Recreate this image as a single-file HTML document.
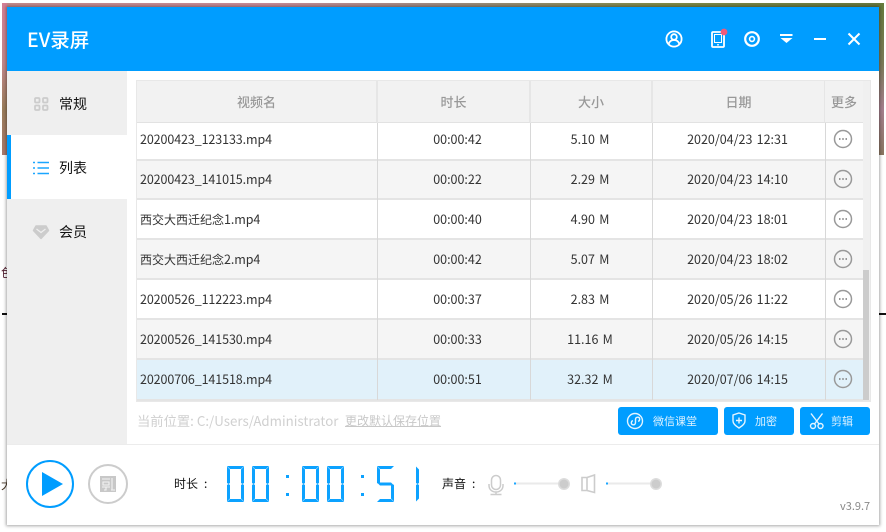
<!DOCTYPE html>
<html lang="zh-CN"><head><meta charset="utf-8"><title>EV录屏</title>
<style>
*{box-sizing:border-box;margin:0;padding:0}
html,body{width:886px;height:532px;overflow:hidden;background:#fff}
body{position:relative;font-family:"Liberation Sans","Noto Sans CJK SC",sans-serif;font-size:12px;color:#333}
.a{position:absolute}
.cell{position:absolute;text-align:center;white-space:nowrap;font-family:"Noto Sans CJK SC",sans-serif;font-size:12.5px;line-height:20px;color:#333;word-spacing:1.500px}
.name{text-align:left;letter-spacing:-.1px;word-spacing:0}
.name b{font-weight:400;font-size:12px;letter-spacing:0}
.hd{position:absolute;top:81px;height:42px;background:#f2f2f2;border-right:2px solid #e6e6e6;border-bottom:1px solid #e2e2e2;text-align:center;line-height:41px;font-family:"Noto Sans CJK SC",sans-serif;font-size:13px;font-weight:500;color:#999}
.row{position:absolute;left:137px;width:726px;height:40px;border-bottom:2px solid #e4e4e4}
.v{position:absolute;top:123px;width:1px;height:277px;background:#d8d8d8}
.btn{position:absolute;top:407px;height:28px;background:#009dff;border-radius:3px;color:#dff2ff;font-family:"Noto Sans CJK SC",sans-serif;font-size:11px;line-height:28px}
.nav{position:absolute;left:59px;font-family:"Noto Sans CJK SC",sans-serif;font-size:14px;line-height:20px;color:#111}
svg{position:absolute;overflow:visible}
.t{left:381px;width:153px}.s{left:529px;width:122px}.d{left:651px;width:173px}
</style></head><body>
<div class="a" style="left:2px;top:3px;width:882px;height:152px;background:linear-gradient(90deg,#c38a8c 0,#c78b98 30%,#9c8a80 50%,#7f8a48 75%,#66783f 100%)"></div>
<div class="a" style="left:2px;top:3px;width:5px;height:152px;background:linear-gradient(180deg,#d47f95 0,#c1878a 40%,#9a7d5b 70%,#a8786c 100%)"></div>
<div class="a" style="left:879px;top:3px;width:5px;height:152px;background:linear-gradient(180deg,#667a3c 0,#7c7a58 40%,#a57f8d 70%,#8a7560 100%)"></div>
<div class="a" style="left:1px;top:264px;font:12px 'Noto Sans CJK SC',sans-serif;width:6px;overflow:hidden;color:#523;height:16px">&#33394;</div>
<div class="a" style="left:2px;top:313px;width:5px;height:2px;background:#111"></div>
<div class="a" style="left:879px;top:313px;width:7px;height:2px;background:#111"></div>
<div class="a" style="left:1px;top:476px;font:12px 'Noto Sans CJK SC',sans-serif;width:6px;overflow:hidden;color:#432;height:16px">&#22823;</div>
<div class="a" style="left:7px;top:7px;width:872px;height:518px;background:#fff;box-shadow:0 0 3px 1px rgba(0,0,0,.35)"></div>

<div class="a" style="left:7px;top:7px;width:872px;height:64px;background:#009dff"></div>
<div class="a" style="left:27px;top:26px;color:#fff;font-family:'Noto Sans CJK SC',sans-serif;font-size:19.500px;font-weight:500;line-height:26px">EV录屏</div>

<svg style="left:0;top:0" width="886" height="532" fill="none">
<g stroke="#fff" stroke-width="1.800">
<circle cx="674" cy="39" r="7.600"/><circle cx="674" cy="37" r="2.800"/><path d="M668.600 44.300c.8-3 2.800-4.300 5.400-4.300s4.600 1.300 5.400 4.300"/>
<rect x="712" y="32" width="12" height="15" rx="1"/><path d="M714.500 34.500h7v8h-7z" stroke-width="1"/><path d="M717 44.800h2" stroke-width="1.200"/>
<circle cx="752" cy="39" r="6.800" stroke-width="2.200"/><circle cx="752" cy="39" r="2.400" stroke-width="1.600"/>
<path d="M780 35h12.500" stroke-width="2"/><path d="M814 39h12" stroke-width="2"/><path d="M848.500 33.500l11 11M859.500 33.500l-11 11" stroke-width="2"/>
</g>
<path d="M780.500 38h12l-6 5z" fill="#fff"/>
<circle cx="724" cy="32" r="3.400" fill="#ef5a7a"/>
</svg>

<div class="a" style="left:7px;top:71px;width:120px;height:373px;background:#efefef"></div>
<div class="a" style="left:7px;top:135px;width:120px;height:64px;background:#fff"></div>
<div class="a" style="left:7px;top:135px;width:4px;height:64px;background:#009dff"></div>
<div class="nav" style="top:94px">常规</div><div class="nav" style="top:158px">列表</div><div class="nav" style="top:222px">会员</div>
<svg style="left:0;top:0" width="130" height="250" fill="none">
<g stroke="#ccc" stroke-width="1.800"><rect x="35" y="98" width="4.500" height="4.500" rx="1"/><rect x="43" y="98" width="4.500" height="4.500" rx="1"/><rect x="35" y="105.500" width="4.500" height="4.500" rx="1"/><rect x="43" y="105.500" width="4.500" height="4.500" rx="1"/></g>
<path d="M33 162.500h2M33 168h2M33 173.500h2M37.500 162.500h11.500M37.500 168h11.500M37.500 173.500h11.500" stroke="#1aa6ff" stroke-width="1.500"/>
<path d="M36 226h10l2.500 4.500-7.500 8-7.500-8z" fill="#ccc" stroke="#ccc" stroke-width="1.500" stroke-linejoin="round"/><path d="M36.500 229l4.500 3.500 4.500-3.500" stroke="#efefef" stroke-width="1.200"/>
</svg>

<!-- table -->
<div class="a" style="left:136px;top:80px;width:735px;height:322px;background:#e8e8e8"></div>
<div class="a" style="left:137px;top:81px;width:726px;height:320px;background:#fff"></div>
<div class="hd" style="left:137px;width:241px">视频名</div>
<div class="hd" style="left:378px;width:153px">时长</div>
<div class="hd" style="left:531px;width:122px">大小</div>
<div class="hd" style="left:653px;width:173px">日期</div>
<div class="hd" style="left:825px;width:38px;border-right:0">更多</div>
<div class="a" style="left:863px;top:81px;width:7px;height:319px;background:#f0f0f0"></div>
<div class="a" style="left:863px;top:270px;width:6px;height:130px;background:#ccc"></div>

<div class="row" style="top:123px;height:38px;background:#fff"></div>
<div class="row" style="top:161px;background:#f5f5f5;height:39px"></div>
<div class="row" style="top:200px;background:#fff"></div>
<div class="row" style="top:240px;background:#f5f5f5"></div>
<div class="row" style="top:280px;background:#fff"></div>
<div class="row" style="top:320px;background:#f5f5f5"></div>
<div class="row" style="top:360px;background:#e1f1fa;height:41px"></div>
<div class="v" style="left:377px"></div><div class="v" style="left:530px"></div><div class="v" style="left:652px"></div><div class="v" style="left:825px"></div>

<div class="cell name" style="left:140px;top:129px">20200423_123133.mp4</div><div class="cell t" style="top:129px">00:00:42</div><div class="cell s" style="top:129px">5.10 M</div><div class="cell d" style="top:129px">2020/04/23 12:31</div>
<div class="cell name" style="left:140px;top:169px">20200423_141015.mp4</div><div class="cell t" style="top:169px">00:00:22</div><div class="cell s" style="top:169px">2.29 M</div><div class="cell d" style="top:169px">2020/04/23 14:10</div>
<div class="cell name" style="left:140px;top:209px"><b>西交大西迁纪念</b>1.mp4</div><div class="cell t" style="top:209px">00:00:40</div><div class="cell s" style="top:209px">4.90 M</div><div class="cell d" style="top:209px">2020/04/23 18:01</div>
<div class="cell name" style="left:140px;top:249px"><b>西交大西迁纪念</b>2.mp4</div><div class="cell t" style="top:249px">00:00:42</div><div class="cell s" style="top:249px">5.07 M</div><div class="cell d" style="top:249px">2020/04/23 18:02</div>
<div class="cell name" style="left:140px;top:289px">20200526_112223.mp4</div><div class="cell t" style="top:289px">00:00:37</div><div class="cell s" style="top:289px">2.83 M</div><div class="cell d" style="top:289px">2020/05/26 11:22</div>
<div class="cell name" style="left:140px;top:329px">20200526_141530.mp4</div><div class="cell t" style="top:329px">00:00:33</div><div class="cell s" style="top:329px">11.16 M</div><div class="cell d" style="top:329px">2020/05/26 14:15</div>
<div class="cell name" style="left:140px;top:369px">20200706_141518.mp4</div><div class="cell t" style="top:369px">00:00:51</div><div class="cell s" style="top:369px">32.32 M</div><div class="cell d" style="top:369px">2020/07/06 14:15</div>

<svg style="left:0;top:0" width="886" height="420" fill="none">
<defs><g id="more"><circle r="8.500" stroke="#999" stroke-width="1.500"/><path d="M-4 0h1.500M-.75 0h1.500M2.500 0H4" stroke="#888" stroke-width="1.700"/></g></defs>
<use href="#more" x="843" y="139"/><use href="#more" x="843" y="179"/><use href="#more" x="843" y="219"/><use href="#more" x="843" y="259"/><use href="#more" x="843" y="299"/><use href="#more" x="843" y="339"/><use href="#more" x="843" y="379"/>
</svg>

<div class="a" style="left:137px;top:412px;font-family:'Noto Sans CJK SC',sans-serif;font-size:13.300px;line-height:18px;color:#d0d0d0;white-space:nowrap">当前位置: C:/Users/Administrator</div>
<div class="a" style="left:345px;top:412px;font-family:'Noto Sans CJK SC',sans-serif;font-size:12px;line-height:18px;color:#c8c8c8;text-decoration:underline;white-space:nowrap">更改默认保存位置</div>

<div class="btn" style="left:618px;width:100px"><span class="a" style="left:35px">微信课堂</span></div>
<div class="btn" style="left:724px;width:70px"><span class="a" style="left:31px">加密</span></div>
<div class="btn" style="left:800px;width:70px"><span class="a" style="left:31px">剪辑</span></div>
<svg style="left:0;top:0" width="886" height="440" fill="none" stroke="#e4f4ff" stroke-width="1.400">
<circle cx="635" cy="421" r="7.500"/><path d="M632.800 420.500c-2 1-2 4 .2 4.300 1.700.2 2.500-1 2.500-2.300v-3c0-1.300.8-2.500 2.500-2.300 2.200.3 2.200 3.300.2 4.300"/>
<path d="M739 413l6 2v6c0 3-3 5.200-6 7-3-1.800-6-4-6-7v-6z"/><path d="M739 417.500v6M736 420.500h6"/>
<circle cx="813" cy="426" r="2.500"/><circle cx="820.500" cy="426" r="2.500"/><path d="M814.500 424l8-10.500M819 424l-8-10.500"/>
</svg>

<!-- bottom -->
<div class="a" style="left:7px;top:444px;width:872px;height:1px;background:#ececec"></div>
<svg style="left:0;top:0" width="886" height="532" fill="none">
<circle cx="50" cy="484" r="23" stroke="#009dff" stroke-width="2"/>
<path d="M42 472v24l21-12z" fill="#009dff"/>
<circle cx="108" cy="484" r="19" stroke="#ccc" stroke-width="2"/>
<rect x="100" y="476" width="16" height="16" fill="#c8c8c8"/>
<path d="M102 479h8M103 482h6v3h-6zM102 487h8M106 487v3h-2M112 478v12M111 490h4" stroke="#f3f3f3" stroke-width="1.100"/>
</svg>
<div class="a" style="left:174px;top:475px;font-family:'Noto Sans CJK SC',sans-serif;font-size:12px;line-height:18px;color:#111">时长</div>
<div class="a" style="left:204px;top:475px;font-family:'Noto Sans CJK SC',sans-serif;font-size:12px;line-height:18px;color:#111">:</div>
<div class="a" style="left:442px;top:475px;font-family:'Noto Sans CJK SC',sans-serif;font-size:12px;line-height:18px;color:#111">声音</div>
<div class="a" style="left:472px;top:475px;font-family:'Noto Sans CJK SC',sans-serif;font-size:12px;line-height:18px;color:#111">:</div>

<svg style="left:0;top:0" width="886" height="532" fill="#0ca2ff">
<title>00:00:51</title>
<defs>
<path id="t" d="M0 0h17l-3 3H3z"/>
<path id="b" d="M0 36h17l-3-3H3z"/>
<path id="tl" d="M0 .500l3 3V17l-1.500 1L0 17z"/>
<path id="bl" d="M0 19l1.500-1L3 19v13.500l-3 3z"/>
<path id="tr" d="M17 .500l-3 3V17l1.500 1 1.500-1z"/>
<path id="br" d="M17 19l-1.500-1L14 19v13.500l3 3z"/>
<path id="m" d="M1.500 18l1.500-1.500h11l1.500 1.500-1.500 1.500H3z"/>
<g id="d0"><use href="#t"/><use href="#b"/><use href="#tl"/><use href="#bl"/><use href="#tr"/><use href="#br"/></g>
</defs>
<use href="#d0" x="227" y="466"/><use href="#d0" x="252" y="466"/>
<rect x="286" y="475" width="3" height="3"/><rect x="286" y="493" width="3" height="3"/>
<use href="#d0" x="302" y="466"/><use href="#d0" x="327" y="466"/>
<rect x="361" y="475" width="3" height="3"/><rect x="361" y="493" width="3" height="3"/>
<g transform="translate(377 466)"><use href="#t"/><use href="#b"/><use href="#tl"/><use href="#br"/><use href="#m"/></g>
<g transform="translate(416 466)"><use href="#tl"/><use href="#bl"/></g>
</svg>

<svg style="left:0;top:0" width="886" height="532" fill="none">
<rect x="491.500" y="475.500" width="9" height="14" rx="4.500" stroke="#ccc" stroke-width="1.500"/>
<path d="M489 484v1.500c0 4 3 6.500 7 6.500s7-2.500 7-6.500V484M496 492v2.500M490.500 494.500h11" stroke="#ccc" stroke-width="1.500"/>
<path d="M514 483.500h50M606 483.500h50" stroke="#eaeaea" stroke-width="2"/>
<path d="M514 483.500h2M606 483.500h2" stroke="#1aa6ff" stroke-width="2"/>
<circle cx="564" cy="484" r="6" fill="#ddd"/><circle cx="564" cy="484" r="4.500" fill="#ccc"/>
<circle cx="656" cy="484" r="6" fill="#ddd"/><circle cx="656" cy="484" r="4.500" fill="#ccc"/>
<path d="M582 477.500h5v13h-5zM587 477.500l7.500-2.500v17.500l-7.500-2" stroke="#ccc" stroke-width="1.600"/>
</svg>
<div class="a" style="left:840px;top:498px;font-family:'Noto Sans CJK SC',sans-serif;font-size:11px;line-height:16px;color:#888">v3.9.7</div>
</body></html>
